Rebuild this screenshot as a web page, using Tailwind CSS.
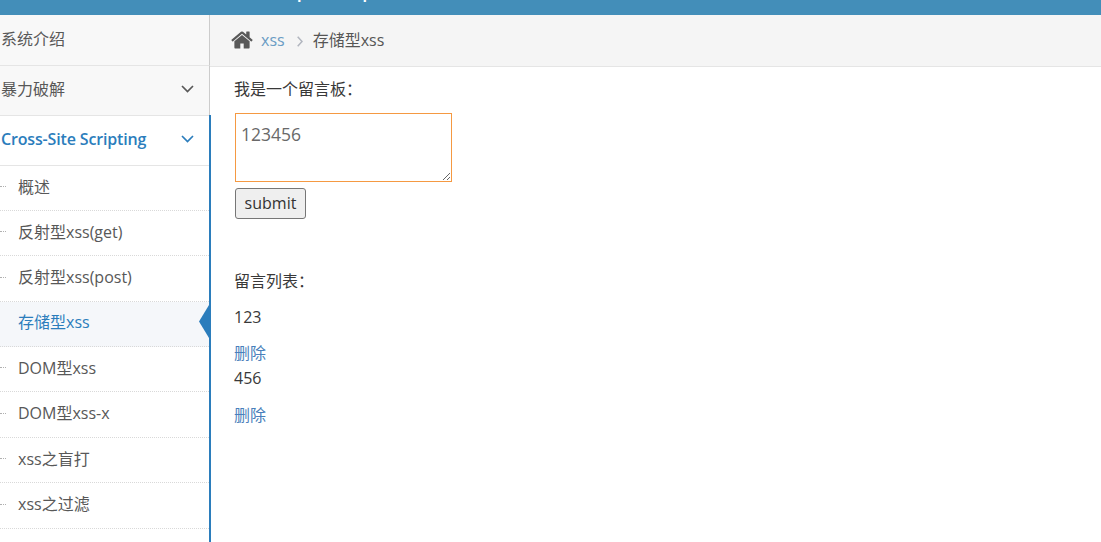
<!DOCTYPE html>
<html lang="en">
<head>
    <meta charset="UTF-8">
    <meta name="viewport" content="width=device-width, initial-scale=1.0">
    <title>存储型xss</title>
    <script src="https://cdn.jsdelivr.net/npm/@tailwindcss/browser@4"></script>
</head>
<body class="h-[542px] overflow-hidden bg-white font-['Open_Sans','Noto_Sans_CJK_SC',sans-serif] text-base text-[#393939]">

    <!-- Top bar: only the descenders of the title are in view -->
    <header class="h-[15px] bg-[#438eb9] overflow-hidden flex items-start pl-[296px]">
        <span class="text-[26px] leading-[26px] mt-[-27px] text-white whitespace-nowrap">pika~pika~</span>
    </header>

    <div class="flex h-[527px]">
        <!-- Sidebar -->
        <aside class="w-[210px] shrink-0 flex flex-col relative z-10 text-[#585858]">
            <div class="h-[51px] w-[210px] bg-[#f8f8f8] border-r border-b border-r-[#cccccc] border-b-[#e5e5e5] flex items-center pl-px pb-[2px]">系统介绍</div>
            <div class="h-[49px] w-[210px] bg-[#f8f8f8] border-r border-r-[#cccccc] flex items-center justify-between pl-px pr-[15px] pb-[3px]">
                暴力破解
                <svg class="w-[13px] h-[8px]" viewBox="0 0 13 8" fill="none" stroke="#585858" stroke-width="1.7"><path d="M1 1l5.500 5.500L12 1"/></svg>
            </div>
            <div class="w-[211px] flex-1 border-r-2 border-[#2b7dbc] bg-white">
                <div class="h-[51px] border-t border-b border-[#e5e5e5] flex items-center justify-between pl-px pr-[15px] pb-[4px] font-semibold tracking-[-0.16px] text-[#2b7dbc]">
                    Cross-Site Scripting
                    <svg class="w-[13px] h-[8px]" viewBox="0 0 13 8" fill="none" stroke="#2b7dbc" stroke-width="1.7"><path d="M1 1l5.500 5.500L12 1"/></svg>
                </div>
                <ul>
                    <li class="h-[45px] pb-[3px] border-b border-dotted border-[#d9d9d9] flex items-center gap-[12px]"><i class="w-[6px] border-t border-dotted border-[#b0b0b0]"></i>概述</li>
                    <li class="h-[45px] pb-[3px] border-b border-dotted border-[#d9d9d9] flex items-center gap-[12px]"><i class="w-[6px] border-t border-dotted border-[#b0b0b0]"></i>反射型xss(get)</li>
                    <li class="h-[46px] pb-[3px] border-b border-dotted border-[#d9d9d9] flex items-center gap-[12px]"><i class="w-[6px] border-t border-dotted border-[#b0b0b0]"></i>反射型xss(post)</li>
                    <li class="relative h-[45px] pb-[4px] border-b border-dotted border-[#d9d9d9] bg-[#f5f7fa] text-[#2b7dbc] flex items-center pl-[18px]">
                        存储型xss
                        <span class="absolute right-0 top-[3px] w-[10px] h-[33px] bg-[#2b7dbc] [clip-path:polygon(100%_0,100%_100%,0_50%)]"></span>
                    </li>
                    <li class="h-[45px] pb-[3px] border-b border-dotted border-[#d9d9d9] flex items-center gap-[12px]"><i class="w-[6px] border-t border-dotted border-[#b0b0b0]"></i>DOM型xss</li>
                    <li class="h-[46px] pb-[3px] border-b border-dotted border-[#d9d9d9] flex items-center gap-[12px]"><i class="w-[6px] border-t border-dotted border-[#b0b0b0]"></i>DOM型xss-x</li>
                    <li class="h-[45px] pb-[3px] border-b border-dotted border-[#d9d9d9] flex items-center gap-[12px]"><i class="w-[6px] border-t border-dotted border-[#b0b0b0]"></i>xss之盲打</li>
                    <li class="h-[46px] pb-[3px] border-b border-dotted border-[#d9d9d9] flex items-center gap-[12px]"><i class="w-[6px] border-t border-dotted border-[#b0b0b0]"></i>xss之过滤</li>
                </ul>
            </div>
        </aside>

        <!-- Main Content -->
        <main class="flex-1">
            <div class="h-[52px] bg-[#f5f5f5] border-b border-[#e5e5e5] flex items-center pl-[21px] pb-[2px] text-[#555555]">
                <svg class="w-[22px] h-[24px] fill-[#585858]" viewBox="0 0 1664 1792"><path d="M1408 992v480q0 26-19 45t-45 19h-384v-384h-256v384h-384q-26 0-45-19t-19-45v-480q0-1 .5-3t.5-3l575-474 575 474q1 2 1 6zm223-69l-62 74q-8 9-21 11h-3q-13 0-21-7l-692-577-692 577q-12 8-24 7-13-2-21-11l-62-74q-8-10-7-23.500t11-21.500l719-599q32-26 76-26t76 26l244 204v-195q0-14 9-23t23-9h192q14 0 23 9t9 23v408l219 182q10 8 11 21.500t-7 23.500z"/></svg>
                <a href="#" class="ml-[8px] text-[#6a9cc4]">xss</a>
                <svg class="ml-[12px] mt-[4px] w-[6px] h-[11px]" viewBox="0 0 6 11" fill="none" stroke="#b2b6bf" stroke-width="1.500"><path d="M.7 .7l4.300 4.800-4.300 4.800"/></svg>
                <span class="ml-[10px]">存储型xss</span>
            </div>

            <div class="pl-[24px]">
                <p class="h-[24px] leading-[24px] mt-[10px]">我是一个留言板：</p>
                <form class="mt-[12px] flex flex-col items-start">
                    <textarea class="block ml-px w-[217px] h-[69px] border border-[#f59942] px-[5px] pt-[8px] pb-[4px] text-[17.5px] leading-[24px] text-[#696969] bg-white outline-none">123456</textarea>
                    <button type="button" class="ml-px mt-[6px] h-[31px] w-[71px] pb-[2px] bg-[#efefef] border border-[#767676] rounded-[3px] text-[#333333]">submit</button>
                </form>
                <p class="h-[24px] leading-[24px] mt-[50px]">留言列表：</p>
                <p class="h-[24px] leading-[24px] mt-[12px]">123</p>
                <a href="#" class="block h-[24px] leading-[24px] mt-[12px] text-[#4a7fbb]">删除</a>
                <p class="h-[24px] leading-[24px] mt-px">456</p>
                <a href="#" class="block h-[24px] leading-[24px] mt-[13px] text-[#4a7fbb]">删除</a>
            </div>
        </main>
    </div>
</body>
</html>
